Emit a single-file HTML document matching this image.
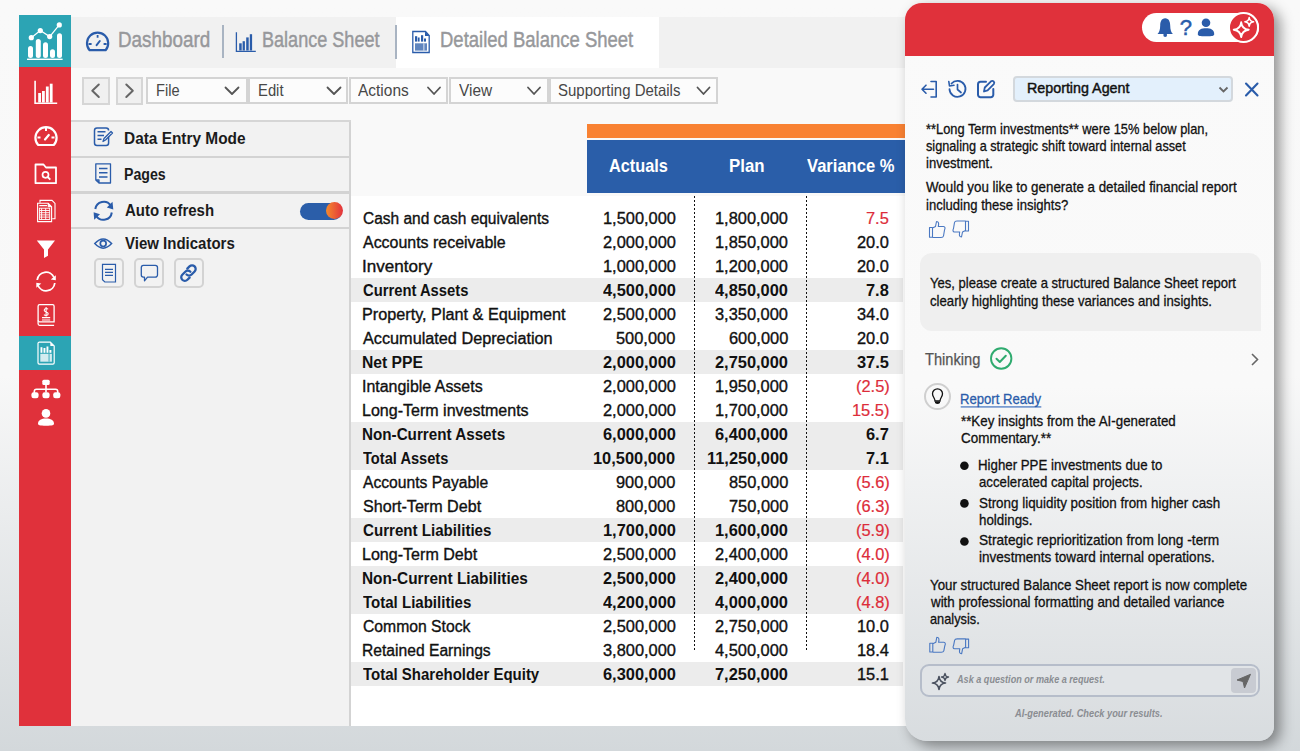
<!DOCTYPE html>
<html><head><meta charset="utf-8">
<style>
html,body{margin:0;padding:0;width:1300px;height:751px;overflow:hidden;}
body{position:relative;font-family:"Liberation Sans",sans-serif;background:linear-gradient(180deg,#f9f9f9 0%,#f8f8f8 50%,#d3d8db 100%);}
.a{position:absolute;}
.t{position:absolute;white-space:nowrap;line-height:1;transform-origin:0 0;}
svg{position:absolute;overflow:visible;}
</style></head><body>

<!-- main container -->
<div class="a" style="left:71px;top:68px;width:840px;height:658px;background:#f9f9f9;"></div>
<!-- tab bar -->
<div class="a" style="left:71px;top:16.5px;width:840px;height:51.5px;background:#f1f1f1;"></div>
<div class="a" style="left:396px;top:16.5px;width:263px;height:51.5px;background:#fff;"></div>
<div class="a" style="left:222px;top:25px;width:2px;height:33px;background:#a9b4c2;"></div>
<div class="a" style="left:394.5px;top:25px;width:2px;height:34px;background:#a9b4c2;"></div>

<!-- sidebar -->
<div class="a" style="left:19px;top:67px;width:51.5px;height:659px;background:#e0313b;"></div>
<div class="a" style="left:19px;top:15px;width:51.5px;height:52px;background:#2ca4b4;"></div>
<div class="a" style="left:19px;top:336px;width:51.5px;height:34px;background:#2ca4b4;"></div>

<!-- toolbar -->
<div class="a" style="left:82px;top:77px;width:23.5px;height:23.5px;background:#f0f0f0;border:2px solid #d6d6d6;"></div>
<div class="a" style="left:115.5px;top:77px;width:23.5px;height:23.5px;background:#f0f0f0;border:2px solid #d6d6d6;"></div>
<div class="a" style="left:145.5px;top:76.5px;width:98px;height:23.5px;background:#fcfcfc;border:2px solid #d4d4d4;"></div>
<div class="a" style="left:248px;top:76.5px;width:96px;height:23.5px;background:#fcfcfc;border:2px solid #d4d4d4;"></div>
<div class="a" style="left:349px;top:76.5px;width:95px;height:23.5px;background:#fcfcfc;border:2px solid #d4d4d4;"></div>
<div class="a" style="left:449px;top:76.5px;width:95.5px;height:23.5px;background:#fcfcfc;border:2px solid #d4d4d4;"></div>
<div class="a" style="left:549px;top:76.5px;width:164.5px;height:23.5px;background:#fcfcfc;border:2px solid #d4d4d4;"></div>
<svg width="1300" height="751" style="left:0;top:0" fill="none" stroke="#555" stroke-width="1.8" stroke-linecap="round" stroke-linejoin="round">
  <path d="M98.8 84.5 L92.3 90.8 L98.8 97" stroke="#666" stroke-width="2"/>
  <path d="M126.3 84.5 L132.8 90.8 L126.3 97" stroke="#666" stroke-width="2"/>
  <path d="M225.5 87.5 L232 94 L238.5 87.5"/>
  <path d="M327.5 87.5 L334 94 L340.5 87.5"/>
  <path d="M428 87.5 L434 94 L440 87.5"/>
  <path d="M528 87.5 L534 94 L540 87.5"/>
  <path d="M697.5 87.5 L703.5 94 L709.5 87.5"/>
</svg>

<!-- left panel -->
<div class="a" style="left:71px;top:121px;width:278px;height:605px;background:#f2f2f2;border-right:2px solid #d3d3d3;"></div>
<div class="a" style="left:71px;top:119.8px;width:280px;height:2.2px;background:#d6d6d6;"></div>
<div class="a" style="left:71px;top:155.5px;width:280px;height:2.5px;background:#d3d3d3;"></div>
<div class="a" style="left:71px;top:191.2px;width:280px;height:2.4px;background:#d3d3d3;"></div>
<div class="a" style="left:71px;top:226.7px;width:280px;height:2px;background:#d3d3d3;"></div>
<!-- toggle -->
<div class="a" style="left:300px;top:202.5px;width:42px;height:17px;border-radius:9px;background:#2b5ea9;"></div>
<div class="a" style="left:325.5px;top:202.3px;width:17px;height:17px;border-radius:50%;background:linear-gradient(90deg,#f58a2c,#e2323d);"></div>
<!-- indicator buttons -->
<div class="a" style="left:94px;top:258.3px;width:26.3px;height:26px;border:2px solid #d3d3d3;border-radius:5px;background:#f2f2f2;"></div>
<div class="a" style="left:134px;top:258.3px;width:26.3px;height:26px;border:2px solid #d3d3d3;border-radius:5px;background:#f2f2f2;"></div>
<div class="a" style="left:174px;top:258.3px;width:26.3px;height:26px;border:2px solid #d3d3d3;border-radius:5px;background:#f2f2f2;"></div>

<!-- table -->
<div class="a" style="left:351px;top:196px;width:560px;height:530px;background:#fff;"></div>
<div class="a" style="left:587px;top:124px;width:330px;height:13.5px;background:#f98233;"></div>
<div class="a" style="left:587px;top:140px;width:330px;height:52.8px;background:#2a5ea9;"></div>
<div class="a" style="left:351px;top:278px;width:552px;height:24px;background:#ececec;"></div>
<div class="a" style="left:351px;top:350px;width:552px;height:24px;background:#ececec;"></div>
<div class="a" style="left:351px;top:422px;width:552px;height:48px;background:#ececec;"></div>
<div class="a" style="left:351px;top:518px;width:552px;height:24px;background:#ececec;"></div>
<div class="a" style="left:351px;top:566px;width:552px;height:48px;background:#ececec;"></div>
<div class="a" style="left:351px;top:662px;width:552px;height:24px;background:#ececec;"></div>
<div class="a" style="left:694px;top:196px;width:1px;height:454px;background:repeating-linear-gradient(180deg,#111 0 2px,transparent 2px 4px);"></div>
<div class="a" style="left:806px;top:196px;width:1px;height:454px;background:repeating-linear-gradient(180deg,#111 0 2px,transparent 2px 4px);"></div>


<!-- sidebar icons -->
<svg width="1300" height="751" style="left:0;top:0">
 <!-- logo -->
 <g fill="#fff" stroke="none">
  <rect x="28" y="46" width="5" height="12" rx="2.5"/>
  <rect x="35.8" y="39" width="5" height="19" rx="2.5"/>
  <rect x="43" y="42.3" width="5" height="15.7" rx="2.5"/>
  <rect x="50" y="49.3" width="5" height="8.7" rx="2.5"/>
  <rect x="57" y="33.3" width="5" height="24.7" rx="2.5"/>
  <rect x="27" y="58.6" width="35.6" height="1.4"/>
  <circle cx="31.3" cy="37.7" r="2.6"/>
  <circle cx="40.3" cy="30.6" r="2.6"/>
  <circle cx="49.7" cy="36.6" r="2.6"/>
  <circle cx="59.3" cy="24.9" r="2.6"/>
 </g>
 <path d="M31.3 37.7 L40.3 30.6 L49.7 36.6 L59.3 24.9" stroke="#fff" stroke-width="1.2" fill="none"/>
 <g fill="none" stroke="#fff" stroke-width="1.6">
  <!-- 1 bar chart -->
  <path d="M35.1 80.8 V103.2 H57.2"/>
  <g fill="#fff" stroke="none"><rect x="38.2" y="93" width="2.8" height="9.5"/><rect x="42" y="91" width="2.8" height="11.5"/><rect x="45.9" y="86.5" width="2.8" height="16"/><rect x="49.8" y="83.7" width="2.8" height="18.8"/></g>
  <!-- 2 gauge -->
  <path d="M38.2 145 A10.6 10.6 0 1 1 53.8 145 Z" stroke-width="2.2"/>
  <path d="M46 128 V131 M37.5 137.5 H40.5 M51.5 137.5 H54.5" stroke-width="2"/>
  <path d="M45 139.5 L48.8 135" stroke-width="2.2" stroke-linecap="round"/>
  <!-- 3 folder search -->
  <path d="M35.5 164.5 H43.5 L46 167.5 H56 V183.2 H35.5 Z" stroke-width="1.8" stroke-linejoin="round"/>
  <circle cx="45.5" cy="174.8" r="3" stroke-width="1.7"/>
  <path d="M47.7 177 L50.3 179.6" stroke-width="1.8"/>
  <!-- 4 spreadsheet -->
  <path d="M40 202.8 V200.4 H52 L55 203.4 V218.8 H52.2" stroke-width="1.1"/>
  <path d="M37.6 203.3 H48.2 L51.6 206.7 V221.6 H37.6 Z" stroke-width="1.1" fill="#e0313b"/>
  <path d="M48.2 203.3 V206.7 H51.6" stroke-width="1" fill="#fff"/>
  <path d="M39.3 205.6 H47" stroke-width="1.2"/>
  <rect x="39.4" y="208.2" width="10.3" height="11.3" stroke-width="0.9"/>
  <path d="M41.6 208.2 V219.5 M45.7 208.2 V219.5 M39.4 210.5 H49.7 M39.4 212.7 H49.7 M39.4 214.9 H49.7 M39.4 217.1 H49.7" stroke-width="0.9"/>
  <!-- 6 refresh -->
  <path d="M37.2 280 A8.8 8.8 0 0 1 54 277.5" stroke-width="1.8"/>
  <path d="M54.8 283 A8.8 8.8 0 0 1 38 285.5" stroke-width="1.8"/>
  <!-- 7 dollar doc -->
  <path d="M39.6 304.7 H52.6 A1.5 1.5 0 0 1 54.1 306.2 V321.8 H39.6 A1.5 1.5 0 0 1 38.1 320.3 V306.2 A1.5 1.5 0 0 1 39.6 304.7 Z" stroke-width="1.3"/>
  <path d="M38.1 320.3 V323.8 A1.5 1.5 0 0 0 39.6 325.3 H54.1" stroke-width="1.3"/>
  <path d="M42 317.6 H50.2 M42 320 H50.2" stroke-width="1.1"/>
  <path d="M48 309.3 C47.5 308.2 44.2 308 44.2 310.2 C44.2 312.3 48.2 311.6 48.2 313.8 C48.2 315.8 44.8 315.7 44 314.6 M46.1 307 V316.5" stroke-width="1.1"/>
  <!-- 8 doc chart -->
  <path d="M39.3 342.2 H50.3 L54.2 346.1 V362.8 A1.3 1.3 0 0 1 52.9 364.1 H39.3 A1.3 1.3 0 0 1 38 362.8 V343.5 A1.3 1.3 0 0 1 39.3 342.2 Z" stroke-width="1.2"/>
 </g>
 <g fill="#fff">
  <path d="M55.8 275.2 L55.8 280.3 L50.8 279.6 Z"/>
  <path d="M36.3 287.8 L36.3 282.7 L41.3 283.4 Z"/>
  <!-- filter -->
  <path d="M36.8 240.4 H55 L48 249.5 V255.8 L44 258 V249.5 Z"/>
  <!-- dollar -->
  
  <!-- doc chart fill -->
  <path d="M50.3 342.2 L54.2 346.1 H50.3 Z"/>
  <rect x="40.3" y="353.8" width="11.6" height="7.9" fill="#d3ecf0"/>
  <rect x="40.5" y="347.2" width="1.9" height="5.6"/><rect x="43.5" y="348" width="1.9" height="4.8"/><rect x="46.5" y="346.5" width="1.9" height="6.3"/><rect x="49.4" y="350" width="2" height="2.8"/>
  <!-- org chart -->
  <rect x="42.3" y="379.8" width="7.4" height="5.2" rx="1.5"/>
  <rect x="31.4" y="392.2" width="7.2" height="6" rx="2.3"/>
  <rect x="42.4" y="392.2" width="7.2" height="6" rx="2.3"/>
  <rect x="53.2" y="392.2" width="7.2" height="6" rx="2.3"/>
  <rect x="45.2" y="384.5" width="1.6" height="8"/>
  <path d="M34.3 393 V391.5 Q34.3 389.3 36.5 389.3 H55.5 Q57.7 389.3 57.7 391.5 V393" fill="none" stroke="#fff" stroke-width="1.6"/>
  <!-- user -->
  <circle cx="46" cy="413.4" r="4.3"/>
  <path d="M38 423.6 C38 420 41.5 418.4 46 418.4 C50.5 418.4 54 420 54 423.6 C54 425.3 52.5 425.8 46 425.8 C39.5 425.8 38 425.3 38 423.6 Z"/>
 </g>
 <g fill="#2ca4b4"><rect x="48.6" y="353.8" width="0.9" height="7.9"/></g>
</svg>

<!-- blue icons main -->
<svg width="1300" height="751" style="left:0;top:0" fill="none" stroke="#2a5caa">
 <!-- tab gauge -->
 <path d="M89.6 50.2 A10.6 10.6 0 1 1 105.6 50.2 Z" stroke-width="2.2" stroke-linejoin="round"/>
 <path d="M97.6 35 V37.8 M88.6 44 H91.6 M103.6 44 H106.6" stroke-width="1.8"/>
 <path d="M96.6 45.2 L99.8 41" stroke-width="2" stroke-linecap="round"/>
 <!-- tab bar chart -->
 <path d="M236.4 32.2 V51.3 H255.8" stroke-width="1.3"/>
 <g fill="#2a5caa" stroke="none"><rect x="239.2" y="43.3" width="2.5" height="7.2"/><rect x="242.6" y="41.2" width="2.3" height="9.3"/><rect x="246.2" y="37.4" width="2.5" height="13.1"/><rect x="249.8" y="34.2" width="2.3" height="16.3"/></g>
 <!-- tab doc -->
 <path d="M412.8 31.5 H425.5 L429.2 35.5 V52.5 H412.8 Z" stroke-width="1.3"/>
 <g fill="#2a5caa" stroke="none"><path d="M425 31.5 L429.5 36 L425 36 Z"/><rect x="415" y="36.2" width="2.2" height="5.4"/><rect x="417.8" y="37.5" width="1.8" height="4.1"/><rect x="421" y="35.2" width="2.2" height="6.4"/><rect x="424" y="38.5" width="2" height="3.1"/>
 <rect x="415" y="43.3" width="12" height="7.3" opacity="0.75"/></g>
 <rect x="423.5" y="43.3" width="0.8" height="7.3" fill="#fff" stroke="none"/>
 <!-- data entry -->
 <path d="M108.6 136.5 V143 A2.5 2.5 0 0 1 106.1 145.5 H97 A2.5 2.5 0 0 1 94.5 143 V130.5 A2.5 2.5 0 0 1 97 128 H106.1 A2.5 2.5 0 0 1 108.6 130.5" stroke-width="1.5"/>
 <path d="M97.5 131.8 H105.5 M97.5 135.5 H104 M97.5 139.2 H101.5" stroke-width="1.5"/>
 <path d="M103 141.5 L104 138.5 L111 131.5 L112.5 133 L105.5 140 Z" stroke-width="1.3" stroke-linejoin="round"/>
 <!-- pages -->
 <path d="M95.8 163.8 H110.5 V183 H99 L95.8 180 Z M95.8 180 H99 V183" stroke-width="1.3" stroke-linejoin="round"/>
 <path d="M99 168.5 H107.5 M99 172.8 H107.5 M99 177 H107.5" stroke-width="1.4"/>
 <!-- auto refresh -->
 <path d="M95.3 209 A8.5 8.5 0 0 1 110.8 205.5" stroke-width="2"/>
 <path d="M111.8 212.5 A8.5 8.5 0 0 1 96.3 216" stroke-width="2"/>
 <g fill="#2a5caa" stroke="none"><path d="M112.5 201.8 L113.3 209.5 L106.8 207.5 Z"/><path d="M94.2 219.8 L93.6 212.2 L100 214.3 Z"/></g>
 <!-- eye -->
 <path d="M94.8 243.6 Q103.2 234.5 111.6 243.6 Q103.2 252.7 94.8 243.6 Z" stroke-width="1.5"/>
 <circle cx="103.2" cy="243.6" r="2.9" stroke-width="1.7"/>
 <!-- indicator doc -->
 <path d="M102.5 264.3 H115.5 V282 H104.8 L102.5 279.8 Z" stroke-width="1.2"/>
 <path d="M105 269.4 H113 M105 272.4 H113 M105 275.4 H113" stroke-width="1.2"/>
 <!-- speech -->
 <path d="M143.3 265.4 H155.3 A2.2 2.2 0 0 1 157.5 267.6 V275 A2.2 2.2 0 0 1 155.3 277.2 H147.5 L144.5 280.8 L144.5 277.2 H143.3 A2.2 2.2 0 0 1 141.3 275 V267.6 A2.2 2.2 0 0 1 143.3 265.4 Z" stroke-width="1.3" stroke-linejoin="round"/>
 <!-- link -->
 <g stroke-width="2.3" stroke-linecap="round">
  <path d="M187.3 268.6 L189.5 266.4 A3.6 3.6 0 0 1 194.6 271.5 L191.6 274.5 A3.6 3.6 0 0 1 186.5 274.5"/>
  <path d="M189.6 277.6 L187.4 279.8 A3.6 3.6 0 0 1 182.3 274.7 L185.3 271.7 A3.6 3.6 0 0 1 190.4 271.7"/>
 </g>
</svg>

<div class="t" style="left:117.84px;top:28.80px;font-size:22px;font-weight:normal;font-style:normal;color:#97989b;transform:scaleX(0.8568);-webkit-text-stroke:0.45px #97989b;">Dashboard</div>
<div class="t" style="left:262.18px;top:28.80px;font-size:22px;font-weight:normal;font-style:normal;color:#97989b;transform:scaleX(0.8212);-webkit-text-stroke:0.45px #97989b;">Balance Sheet</div>
<div class="t" style="left:440.16px;top:28.60px;font-size:22px;font-weight:normal;font-style:normal;color:#97989b;transform:scaleX(0.8404);-webkit-text-stroke:0.45px #97989b;">Detailed Balance Sheet</div>
<div class="t" style="left:155.81px;top:81.88px;font-size:16.5px;font-weight:normal;font-style:normal;color:#474747;transform:scaleX(0.8855);">File</div>
<div class="t" style="left:257.60px;top:81.88px;font-size:16.5px;font-weight:normal;font-style:normal;color:#474747;transform:scaleX(0.8977);">Edit</div>
<div class="t" style="left:357.80px;top:81.88px;font-size:16.5px;font-weight:normal;font-style:normal;color:#474747;transform:scaleX(0.9376);">Actions</div>
<div class="t" style="left:458.50px;top:81.88px;font-size:16.5px;font-weight:normal;font-style:normal;color:#474747;transform:scaleX(0.9339);">View</div>
<div class="t" style="left:557.80px;top:81.88px;font-size:16.5px;font-weight:normal;font-style:normal;color:#474747;transform:scaleX(0.9080);">Supporting Details</div>
<div class="t" style="left:124.04px;top:130.60px;font-size:16px;font-weight:bold;font-style:normal;color:#1b1b1b;transform:scaleX(0.9630);">Data Entry Mode</div>
<div class="t" style="left:124.12px;top:166.90px;font-size:16px;font-weight:bold;font-style:normal;color:#1b1b1b;transform:scaleX(0.8845);">Pages</div>
<div class="t" style="left:125.00px;top:202.90px;font-size:16px;font-weight:bold;font-style:normal;color:#1b1b1b;transform:scaleX(0.9359);">Auto refresh</div>
<div class="t" style="left:125.00px;top:235.90px;font-size:16px;font-weight:bold;font-style:normal;color:#1b1b1b;transform:scaleX(0.9379);">View Indicators</div>
<div class="t" style="left:363.00px;top:210.80px;font-size:16px;font-weight:normal;font-style:normal;color:#111;transform:scaleX(0.9681);-webkit-text-stroke:0.35px #111;">Cash and cash equivalents</div>
<div class="t" style="left:602.54px;top:210.80px;font-size:16px;font-weight:normal;font-style:normal;color:#111;transform:scaleX(1.0250);-webkit-text-stroke:0.35px #111;">1,500,000</div>
<div class="t" style="left:715.44px;top:210.80px;font-size:16px;font-weight:normal;font-style:normal;color:#111;transform:scaleX(1.0250);-webkit-text-stroke:0.35px #111;">1,800,000</div>
<div class="t" style="left:866.00px;top:210.80px;font-size:16px;font-weight:normal;font-style:normal;color:#dd2c3a;transform:scaleX(1.0250);-webkit-text-stroke:0.2px #dd2c3a;">7.5</div>
<div class="t" style="left:363.00px;top:234.80px;font-size:16px;font-weight:normal;font-style:normal;color:#111;transform:scaleX(0.9966);-webkit-text-stroke:0.35px #111;">Accounts receivable</div>
<div class="t" style="left:602.54px;top:234.80px;font-size:16px;font-weight:normal;font-style:normal;color:#111;transform:scaleX(1.0250);-webkit-text-stroke:0.35px #111;">2,000,000</div>
<div class="t" style="left:715.44px;top:234.80px;font-size:16px;font-weight:normal;font-style:normal;color:#111;transform:scaleX(1.0250);-webkit-text-stroke:0.35px #111;">1,850,000</div>
<div class="t" style="left:856.88px;top:234.80px;font-size:16px;font-weight:normal;font-style:normal;color:#111;transform:scaleX(1.0250);-webkit-text-stroke:0.35px #111;">20.0</div>
<div class="t" style="left:361.93px;top:258.80px;font-size:16px;font-weight:normal;font-style:normal;color:#111;transform:scaleX(1.0677);-webkit-text-stroke:0.35px #111;">Inventory</div>
<div class="t" style="left:602.54px;top:258.80px;font-size:16px;font-weight:normal;font-style:normal;color:#111;transform:scaleX(1.0250);-webkit-text-stroke:0.35px #111;">1,000,000</div>
<div class="t" style="left:715.44px;top:258.80px;font-size:16px;font-weight:normal;font-style:normal;color:#111;transform:scaleX(1.0250);-webkit-text-stroke:0.35px #111;">1,200,000</div>
<div class="t" style="left:856.88px;top:258.80px;font-size:16px;font-weight:normal;font-style:normal;color:#111;transform:scaleX(1.0250);-webkit-text-stroke:0.35px #111;">20.0</div>
<div class="t" style="left:363.00px;top:282.80px;font-size:16px;font-weight:bold;font-style:normal;color:#111;transform:scaleX(0.9233);">Current Assets</div>
<div class="t" style="left:602.54px;top:282.80px;font-size:16px;font-weight:bold;font-style:normal;color:#111;transform:scaleX(1.0250);">4,500,000</div>
<div class="t" style="left:715.44px;top:282.80px;font-size:16px;font-weight:bold;font-style:normal;color:#111;transform:scaleX(1.0250);">4,850,000</div>
<div class="t" style="left:866.00px;top:282.80px;font-size:16px;font-weight:bold;font-style:normal;color:#111;transform:scaleX(1.0250);">7.8</div>
<div class="t" style="left:361.99px;top:306.80px;font-size:16px;font-weight:normal;font-style:normal;color:#111;transform:scaleX(1.0137);-webkit-text-stroke:0.35px #111;">Property, Plant &amp; Equipment</div>
<div class="t" style="left:602.54px;top:306.80px;font-size:16px;font-weight:normal;font-style:normal;color:#111;transform:scaleX(1.0250);-webkit-text-stroke:0.35px #111;">2,500,000</div>
<div class="t" style="left:715.44px;top:306.80px;font-size:16px;font-weight:normal;font-style:normal;color:#111;transform:scaleX(1.0250);-webkit-text-stroke:0.35px #111;">3,350,000</div>
<div class="t" style="left:856.88px;top:306.80px;font-size:16px;font-weight:normal;font-style:normal;color:#111;transform:scaleX(1.0250);-webkit-text-stroke:0.35px #111;">34.0</div>
<div class="t" style="left:363.00px;top:330.80px;font-size:16px;font-weight:normal;font-style:normal;color:#111;transform:scaleX(1.0152);-webkit-text-stroke:0.35px #111;">Accumulated Depreciation</div>
<div class="t" style="left:616.21px;top:330.80px;font-size:16px;font-weight:normal;font-style:normal;color:#111;transform:scaleX(1.0250);-webkit-text-stroke:0.35px #111;">500,000</div>
<div class="t" style="left:729.11px;top:330.80px;font-size:16px;font-weight:normal;font-style:normal;color:#111;transform:scaleX(1.0250);-webkit-text-stroke:0.35px #111;">600,000</div>
<div class="t" style="left:856.88px;top:330.80px;font-size:16px;font-weight:normal;font-style:normal;color:#111;transform:scaleX(1.0250);-webkit-text-stroke:0.35px #111;">20.0</div>
<div class="t" style="left:362.02px;top:354.80px;font-size:16px;font-weight:bold;font-style:normal;color:#111;transform:scaleX(0.9794);">Net PPE</div>
<div class="t" style="left:602.54px;top:354.80px;font-size:16px;font-weight:bold;font-style:normal;color:#111;transform:scaleX(1.0250);">2,000,000</div>
<div class="t" style="left:715.44px;top:354.80px;font-size:16px;font-weight:bold;font-style:normal;color:#111;transform:scaleX(1.0250);">2,750,000</div>
<div class="t" style="left:856.88px;top:354.80px;font-size:16px;font-weight:bold;font-style:normal;color:#111;transform:scaleX(1.0250);">37.5</div>
<div class="t" style="left:362.00px;top:378.80px;font-size:16px;font-weight:normal;font-style:normal;color:#111;transform:scaleX(0.9971);-webkit-text-stroke:0.35px #111;">Intangible Assets</div>
<div class="t" style="left:602.54px;top:378.80px;font-size:16px;font-weight:normal;font-style:normal;color:#111;transform:scaleX(1.0250);-webkit-text-stroke:0.35px #111;">2,000,000</div>
<div class="t" style="left:715.44px;top:378.80px;font-size:16px;font-weight:normal;font-style:normal;color:#111;transform:scaleX(1.0250);-webkit-text-stroke:0.35px #111;">1,950,000</div>
<div class="t" style="left:855.52px;top:378.80px;font-size:16px;font-weight:normal;font-style:normal;color:#dd2c3a;transform:scaleX(1.0250);-webkit-text-stroke:0.2px #dd2c3a;">(2.5)</div>
<div class="t" style="left:362.00px;top:402.80px;font-size:16px;font-weight:normal;font-style:normal;color:#111;transform:scaleX(1.0019);-webkit-text-stroke:0.35px #111;">Long-Term investments</div>
<div class="t" style="left:602.54px;top:402.80px;font-size:16px;font-weight:normal;font-style:normal;color:#111;transform:scaleX(1.0250);-webkit-text-stroke:0.35px #111;">2,000,000</div>
<div class="t" style="left:715.44px;top:402.80px;font-size:16px;font-weight:normal;font-style:normal;color:#111;transform:scaleX(1.0250);-webkit-text-stroke:0.35px #111;">1,700,000</div>
<div class="t" style="left:851.86px;top:402.80px;font-size:16px;font-weight:normal;font-style:normal;color:#dd2c3a;transform:scaleX(1.0250);-webkit-text-stroke:0.2px #dd2c3a;">15.5)</div>
<div class="t" style="left:362.05px;top:426.80px;font-size:16px;font-weight:bold;font-style:normal;color:#111;transform:scaleX(0.9505);">Non-Current Assets</div>
<div class="t" style="left:602.54px;top:426.80px;font-size:16px;font-weight:bold;font-style:normal;color:#111;transform:scaleX(1.0250);">6,000,000</div>
<div class="t" style="left:715.44px;top:426.80px;font-size:16px;font-weight:bold;font-style:normal;color:#111;transform:scaleX(1.0250);">6,400,000</div>
<div class="t" style="left:866.00px;top:426.80px;font-size:16px;font-weight:bold;font-style:normal;color:#111;transform:scaleX(1.0250);">6.7</div>
<div class="t" style="left:363.00px;top:450.80px;font-size:16px;font-weight:bold;font-style:normal;color:#111;transform:scaleX(0.9144);">Total Assets</div>
<div class="t" style="left:593.42px;top:450.80px;font-size:16px;font-weight:bold;font-style:normal;color:#111;transform:scaleX(1.0250);">10,500,000</div>
<div class="t" style="left:707.22px;top:450.80px;font-size:16px;font-weight:bold;font-style:normal;color:#111;transform:scaleX(1.0250);">11,250,000</div>
<div class="t" style="left:866.00px;top:450.80px;font-size:16px;font-weight:bold;font-style:normal;color:#111;transform:scaleX(1.0250);">7.1</div>
<div class="t" style="left:363.00px;top:474.80px;font-size:16px;font-weight:normal;font-style:normal;color:#111;transform:scaleX(0.9783);-webkit-text-stroke:0.35px #111;">Accounts Payable</div>
<div class="t" style="left:616.21px;top:474.80px;font-size:16px;font-weight:normal;font-style:normal;color:#111;transform:scaleX(1.0250);-webkit-text-stroke:0.35px #111;">900,000</div>
<div class="t" style="left:729.11px;top:474.80px;font-size:16px;font-weight:normal;font-style:normal;color:#111;transform:scaleX(1.0250);-webkit-text-stroke:0.35px #111;">850,000</div>
<div class="t" style="left:855.52px;top:474.80px;font-size:16px;font-weight:normal;font-style:normal;color:#dd2c3a;transform:scaleX(1.0250);-webkit-text-stroke:0.2px #dd2c3a;">(5.6)</div>
<div class="t" style="left:363.00px;top:498.80px;font-size:16px;font-weight:normal;font-style:normal;color:#111;transform:scaleX(1.0066);-webkit-text-stroke:0.35px #111;">Short-Term Debt</div>
<div class="t" style="left:616.21px;top:498.80px;font-size:16px;font-weight:normal;font-style:normal;color:#111;transform:scaleX(1.0250);-webkit-text-stroke:0.35px #111;">800,000</div>
<div class="t" style="left:729.11px;top:498.80px;font-size:16px;font-weight:normal;font-style:normal;color:#111;transform:scaleX(1.0250);-webkit-text-stroke:0.35px #111;">750,000</div>
<div class="t" style="left:855.52px;top:498.80px;font-size:16px;font-weight:normal;font-style:normal;color:#dd2c3a;transform:scaleX(1.0250);-webkit-text-stroke:0.2px #dd2c3a;">(6.3)</div>
<div class="t" style="left:363.00px;top:522.80px;font-size:16px;font-weight:bold;font-style:normal;color:#111;transform:scaleX(0.9440);">Current Liabilities</div>
<div class="t" style="left:602.54px;top:522.80px;font-size:16px;font-weight:bold;font-style:normal;color:#111;transform:scaleX(1.0250);">1,700,000</div>
<div class="t" style="left:715.44px;top:522.80px;font-size:16px;font-weight:bold;font-style:normal;color:#111;transform:scaleX(1.0250);">1,600,000</div>
<div class="t" style="left:855.52px;top:522.80px;font-size:16px;font-weight:normal;font-style:normal;color:#dd2c3a;transform:scaleX(1.0250);-webkit-text-stroke:0.2px #dd2c3a;">(5.9)</div>
<div class="t" style="left:362.00px;top:546.80px;font-size:16px;font-weight:normal;font-style:normal;color:#111;transform:scaleX(1.0037);-webkit-text-stroke:0.35px #111;">Long-Term Debt</div>
<div class="t" style="left:602.54px;top:546.80px;font-size:16px;font-weight:normal;font-style:normal;color:#111;transform:scaleX(1.0250);-webkit-text-stroke:0.35px #111;">2,500,000</div>
<div class="t" style="left:715.44px;top:546.80px;font-size:16px;font-weight:normal;font-style:normal;color:#111;transform:scaleX(1.0250);-webkit-text-stroke:0.35px #111;">2,400,000</div>
<div class="t" style="left:855.52px;top:546.80px;font-size:16px;font-weight:normal;font-style:normal;color:#dd2c3a;transform:scaleX(1.0250);-webkit-text-stroke:0.2px #dd2c3a;">(4.0)</div>
<div class="t" style="left:362.04px;top:570.80px;font-size:16px;font-weight:bold;font-style:normal;color:#111;transform:scaleX(0.9618);">Non-Current Liabilities</div>
<div class="t" style="left:602.54px;top:570.80px;font-size:16px;font-weight:bold;font-style:normal;color:#111;transform:scaleX(1.0250);">2,500,000</div>
<div class="t" style="left:715.44px;top:570.80px;font-size:16px;font-weight:bold;font-style:normal;color:#111;transform:scaleX(1.0250);">2,400,000</div>
<div class="t" style="left:855.52px;top:570.80px;font-size:16px;font-weight:normal;font-style:normal;color:#dd2c3a;transform:scaleX(1.0250);-webkit-text-stroke:0.2px #dd2c3a;">(4.0)</div>
<div class="t" style="left:363.00px;top:594.80px;font-size:16px;font-weight:bold;font-style:normal;color:#111;transform:scaleX(0.9395);">Total Liabilities</div>
<div class="t" style="left:602.54px;top:594.80px;font-size:16px;font-weight:bold;font-style:normal;color:#111;transform:scaleX(1.0250);">4,200,000</div>
<div class="t" style="left:715.44px;top:594.80px;font-size:16px;font-weight:bold;font-style:normal;color:#111;transform:scaleX(1.0250);">4,000,000</div>
<div class="t" style="left:855.52px;top:594.80px;font-size:16px;font-weight:normal;font-style:normal;color:#dd2c3a;transform:scaleX(1.0250);-webkit-text-stroke:0.2px #dd2c3a;">(4.8)</div>
<div class="t" style="left:363.00px;top:618.80px;font-size:16px;font-weight:normal;font-style:normal;color:#111;transform:scaleX(0.9822);-webkit-text-stroke:0.35px #111;">Common Stock</div>
<div class="t" style="left:602.54px;top:618.80px;font-size:16px;font-weight:normal;font-style:normal;color:#111;transform:scaleX(1.0250);-webkit-text-stroke:0.35px #111;">2,500,000</div>
<div class="t" style="left:715.44px;top:618.80px;font-size:16px;font-weight:normal;font-style:normal;color:#111;transform:scaleX(1.0250);-webkit-text-stroke:0.35px #111;">2,750,000</div>
<div class="t" style="left:856.88px;top:618.80px;font-size:16px;font-weight:normal;font-style:normal;color:#111;transform:scaleX(1.0250);-webkit-text-stroke:0.35px #111;">10.0</div>
<div class="t" style="left:362.02px;top:642.80px;font-size:16px;font-weight:normal;font-style:normal;color:#111;transform:scaleX(0.9775);-webkit-text-stroke:0.35px #111;">Retained Earnings</div>
<div class="t" style="left:602.54px;top:642.80px;font-size:16px;font-weight:normal;font-style:normal;color:#111;transform:scaleX(1.0250);-webkit-text-stroke:0.35px #111;">3,800,000</div>
<div class="t" style="left:715.44px;top:642.80px;font-size:16px;font-weight:normal;font-style:normal;color:#111;transform:scaleX(1.0250);-webkit-text-stroke:0.35px #111;">4,500,000</div>
<div class="t" style="left:856.88px;top:642.80px;font-size:16px;font-weight:normal;font-style:normal;color:#111;transform:scaleX(1.0250);-webkit-text-stroke:0.35px #111;">18.4</div>
<div class="t" style="left:363.00px;top:666.80px;font-size:16px;font-weight:bold;font-style:normal;color:#111;transform:scaleX(0.9364);">Total Shareholder Equity</div>
<div class="t" style="left:602.54px;top:666.80px;font-size:16px;font-weight:bold;font-style:normal;color:#111;transform:scaleX(1.0250);">6,300,000</div>
<div class="t" style="left:715.44px;top:666.80px;font-size:16px;font-weight:bold;font-style:normal;color:#111;transform:scaleX(1.0250);">7,250,000</div>
<div class="t" style="left:856.88px;top:666.80px;font-size:16px;font-weight:normal;font-style:normal;color:#111;transform:scaleX(1.0250);-webkit-text-stroke:0.35px #111;">15.1</div>
<div class="t" style="left:608.60px;top:156.05px;font-size:19px;font-weight:bold;font-style:normal;color:#fff;transform:scaleX(0.8580);">Actuals</div>
<div class="t" style="left:729.31px;top:156.05px;font-size:19px;font-weight:bold;font-style:normal;color:#fff;transform:scaleX(0.8853);">Plan</div>
<div class="t" style="left:806.70px;top:156.05px;font-size:19px;font-weight:bold;font-style:normal;color:#fff;transform:scaleX(0.8721);">Variance %</div>

<!-- chat panel -->
<div class="a" style="left:905px;top:3px;width:369px;height:738px;border-radius:17px 17px 15px 22px;background:linear-gradient(180deg,#fafafa 0%,#f9f9f9 52%,#d8dcdf 100%);box-shadow:6px 5px 14px rgba(0,0,0,0.42);overflow:hidden;">
  <div class="a" style="left:0;top:0;width:369px;height:53px;background:#e0313b;"></div>
</div>
<!-- chat components -->
<div class="a" style="left:1141.8px;top:12.8px;width:117px;height:28.8px;border-radius:14.4px;background:#fff;"></div>
<div class="a" style="left:1228.3px;top:12.1px;width:26.5px;height:26.5px;border-radius:50%;background:#e0313b;border:2px solid #fff;"></div>
<div class="a" style="left:1013px;top:76.2px;width:216px;height:21.6px;border-radius:4px;background:#e3f0fc;border:2px solid #d3d8dd;"></div>
<div class="a" style="left:920px;top:253.3px;width:341px;height:78.2px;border-radius:12px 12px 0 12px;background:#efefef;"></div>
<div class="a" style="left:924px;top:383.2px;width:22.6px;height:22.8px;border-radius:50%;border:2px solid #cfcfcf;"></div>
<div class="a" style="left:919.5px;top:664.2px;width:336px;height:28.7px;border-radius:9px;border:2px solid #b6bdca;background:#e1e4e7;"></div>
<div class="a" style="left:1231.2px;top:668px;width:24.6px;height:25px;border-radius:4px;background:#c8cbd2;"></div>
<svg width="1300" height="751" style="left:0;top:0">
 <g fill="#2a5caa">
  <!-- bell -->
  <path d="M1165.2 18.3 C1161.5 18.3 1160.2 22 1160.2 25.5 C1160.2 30 1159 32.5 1157.5 34 H1172.9 C1171.4 32.5 1170.2 30 1170.2 25.5 C1170.2 22 1168.9 18.3 1165.2 18.3 Z"/>
  <circle cx="1165.2" cy="35" r="1.9"/>
  <!-- user -->
  <circle cx="1206" cy="22.8" r="4.3"/>
  <path d="M1197.8 34 C1197.8 29.5 1201.5 28.3 1206 28.3 C1210.5 28.3 1214.2 29.5 1214.2 34 C1214.2 36 1212.5 36.3 1206 36.3 C1199.5 36.3 1197.8 36 1197.8 34 Z"/>
 </g>
 <text x="1185.9" y="35.3" font-size="22" font-family="Liberation Sans" text-anchor="middle" fill="#2a5caa" stroke="#2a5caa" stroke-width="0.5">?</text>
 <!-- sparkles -->
 <g fill="none" stroke="#fff" stroke-width="1.7" stroke-linejoin="round">
  <path d="M1241.2 22.3 Q1242 29 1248.7 29.7 Q1242 30.4 1241.2 37.1 Q1240.4 30.4 1233.7 29.7 Q1240.4 29 1241.2 22.3 Z" stroke-width="1.9"/>
  <path d="M1249.2 17.5 Q1249.7 21.3 1253.5 21.8 Q1249.7 22.3 1249.2 26.1 Q1248.7 22.3 1244.9 21.8 Q1248.7 21.3 1249.2 17.5 Z" stroke-width="1.6"/>
 </g>
 <g fill="none" stroke="#2a5caa" stroke-width="1.6" stroke-linecap="round" stroke-linejoin="round">
  <!-- logout -->
  <path d="M931 81.5 H936.2 V97 H931"/>
  <path d="M933.5 89.2 H922 M926 85.2 L922 89.2 L926 93.2"/>
  <!-- history -->
  <path d="M949.5 89.2 A8 8 0 1 0 951.5 83.5" stroke-width="1.8"/>
  <path d="M948.8 81.5 L949.5 86 L954 85.3" stroke-width="1.6"/>
  <path d="M957.5 84.5 V89.5 L961 92.5" stroke-width="1.7"/>
  <!-- edit -->
  <path d="M986 81.8 H980.5 A2.5 2.5 0 0 0 978 84.3 V94.7 A2.5 2.5 0 0 0 980.5 97.2 H990.8 A2.5 2.5 0 0 0 993.3 94.7 V89" stroke-width="2"/>
  <path d="M984 91.5 L984.8 87.5 L991 81.3 A2 2 0 0 1 993.8 84.1 L987.6 90.3 Z" stroke-width="1.8"/>
  <!-- X -->
  <path d="M1246 83.5 L1257.5 95.5 M1257.5 83.5 L1246 95.5" stroke-width="2.1"/>
 </g>
 <path d="M1219.5 87.5 L1223.5 91.5 L1227.5 87.5" fill="none" stroke="#666" stroke-width="1.8"/>
 <!-- thumbs -->
 <g fill="none" stroke="#4a78c2" stroke-width="1.1" stroke-linejoin="round">
  <path d="M929.5 227.5 H932.5 V237.3 H929.5 Z M932.5 228 L935.5 226.5 L936.5 221.5 C938.8 221.5 939 223.5 938.3 226.5 H943.5 C945.3 226.5 945.3 228.5 944.5 230 L943.5 236 C943.2 237.3 942.5 237.5 941 237.5 H932.5"/>
  <path d="M968.5 231 H965.5 V221.3 H968.5 Z M965.5 230.5 L962.5 232 L961.5 237 C959.2 237 959 235 959.7 232 H954.5 C952.7 232 952.7 230 953.5 228.5 L954.5 222.5 C954.8 221.2 955.5 221 957 221 H965.5"/>
  <path d="M929.8 643.3 H932.8 V652 H929.8 Z M932.8 643.8 L935.8 642.3 L936.8 637.3 C939.1 637.3 939.3 639.3 938.6 642.3 H943.8 C945.6 642.3 945.6 644.3 944.8 645.8 L943.8 650.8 C943.5 652 942.8 652.2 941.3 652.2 H932.8"/>
  <path d="M968.6 647.8 H965.6 V639.1 H968.6 Z M965.6 647.3 L962.6 648.8 L961.6 653.8 C959.3 653.8 959.1 651.8 959.8 648.8 H954.6 C952.8 648.8 952.8 646.8 953.6 645.3 L954.6 640.3 C954.9 639.1 955.6 638.9 957.1 638.9 H965.6"/>
 </g>
 <!-- check -->
 <circle cx="1001.2" cy="358.5" r="10.2" fill="none" stroke="#2fab6f" stroke-width="1.9"/>
 <path d="M996.5 358.8 L999.8 362 L1005.8 355.8" fill="none" stroke="#2fab6f" stroke-width="2" stroke-linecap="round" stroke-linejoin="round"/>
 <!-- chevron right -->
 <path d="M1252 354 L1257.5 359.5 L1252 365" fill="none" stroke="#666" stroke-width="1.6"/>
 <!-- bulb -->
 <path d="M935 401 C935 398 932.5 397 932.5 393.8 A5 5 0 0 1 942.5 393.8 C942.5 397 940 398 940 401 Z" fill="none" stroke="#111" stroke-width="1.3"/>
 <path d="M935 401.5 H940 V403 Q937.5 405 935 403 Z" fill="#111"/>
 <!-- bullets -->
 <g fill="#111"><circle cx="964.4" cy="465.7" r="4.3"/><circle cx="964.4" cy="503.4" r="4.3"/><circle cx="964.4" cy="541.5" r="4.3"/></g>
 <!-- underline report ready -->
 <rect x="960.7" y="406.2" width="80.6" height="1.4" fill="#5a84c6"/>
 <!-- input sparkle -->
 <g fill="none" stroke="#4b5260" stroke-width="1.7" stroke-linejoin="round">
  <path d="M939 676.5 Q939.6 682.4 945.5 683 Q939.6 683.6 939 689.5 Q938.4 683.6 932.5 683 Q938.4 682.4 939 676.5 Z"/>
  <path d="M945 673.5 Q945.3 676.7 948.5 677 Q945.3 677.3 945 680.5 Q944.7 677.3 941.5 677 Q944.7 676.7 945 673.5 Z" stroke-width="1.4"/>
 </g>
 <!-- send -->
 <path d="M1237 680 L1250.5 674.3 L1244.5 688 L1243 681.5 Z" fill="#666" stroke="#666" stroke-width="1" stroke-linejoin="round"/>
</svg>
<div class="t" style="left:1026.77px;top:79.80px;font-size:15.3px;font-weight:normal;font-style:normal;color:#111;transform:scaleX(0.9338);-webkit-text-stroke:0.45px #111;">Reporting Agent</div>
<div class="t" style="left:926.30px;top:121.54px;font-size:14.3px;font-weight:normal;font-style:normal;color:#111111;transform:scaleX(0.8992);-webkit-text-stroke:0.3px #111111;">**Long Term investments** were 15% below plan,</div>
<div class="t" style="left:926.30px;top:139.15px;font-size:14.3px;font-weight:normal;font-style:normal;color:#111111;transform:scaleX(0.8879);-webkit-text-stroke:0.3px #111111;">signaling a strategic shift toward internal asset</div>
<div class="t" style="left:926.30px;top:155.75px;font-size:14.3px;font-weight:normal;font-style:normal;color:#111111;transform:scaleX(0.9150);-webkit-text-stroke:0.3px #111111;">investment.</div>
<div class="t" style="left:926.30px;top:180.44px;font-size:14.3px;font-weight:normal;font-style:normal;color:#111111;transform:scaleX(0.9337);-webkit-text-stroke:0.3px #111111;">Would you like to generate a detailed financial report</div>
<div class="t" style="left:926.30px;top:197.75px;font-size:14.3px;font-weight:normal;font-style:normal;color:#111111;transform:scaleX(0.9132);-webkit-text-stroke:0.3px #111111;">including these insights?</div>
<div class="t" style="left:930.00px;top:275.95px;font-size:14.3px;font-weight:normal;font-style:normal;color:#111111;transform:scaleX(0.9137);-webkit-text-stroke:0.3px #111111;">Yes, please create a structured Balance Sheet report</div>
<div class="t" style="left:930.00px;top:293.64px;font-size:14.3px;font-weight:normal;font-style:normal;color:#111111;transform:scaleX(0.9213);-webkit-text-stroke:0.3px #111111;">clearly highlighting these variances and insights.</div>
<div class="t" style="left:925.00px;top:352.04px;font-size:15.6px;font-weight:normal;font-style:normal;color:#555;transform:scaleX(0.9388);-webkit-text-stroke:0.25px #555;">Thinking</div>
<div class="t" style="left:959.81px;top:391.62px;font-size:14.8px;font-weight:normal;font-style:normal;color:#2a5caa;transform:scaleX(0.8867);-webkit-text-stroke:0.3px #2a5caa;">Report Ready</div>
<div class="t" style="left:960.70px;top:413.54px;font-size:14.3px;font-weight:normal;font-style:normal;color:#111111;transform:scaleX(0.9317);-webkit-text-stroke:0.3px #111111;">**Key insights from the AI-generated</div>
<div class="t" style="left:960.70px;top:431.04px;font-size:14.3px;font-weight:normal;font-style:normal;color:#111111;transform:scaleX(0.9418);-webkit-text-stroke:0.3px #111111;">Commentary.**</div>
<div class="t" style="left:977.77px;top:457.64px;font-size:14.3px;font-weight:normal;font-style:normal;color:#111111;transform:scaleX(0.9276);-webkit-text-stroke:0.3px #111111;">Higher PPE investments due to</div>
<div class="t" style="left:978.70px;top:474.64px;font-size:14.3px;font-weight:normal;font-style:normal;color:#111111;transform:scaleX(0.9231);-webkit-text-stroke:0.3px #111111;">accelerated capital projects.</div>
<div class="t" style="left:978.70px;top:495.75px;font-size:14.3px;font-weight:normal;font-style:normal;color:#111111;transform:scaleX(0.9370);-webkit-text-stroke:0.3px #111111;">Strong liquidity position from higher cash</div>
<div class="t" style="left:978.70px;top:512.64px;font-size:14.3px;font-weight:normal;font-style:normal;color:#111111;transform:scaleX(0.9350);-webkit-text-stroke:0.3px #111111;">holdings.</div>
<div class="t" style="left:978.70px;top:533.45px;font-size:14.3px;font-weight:normal;font-style:normal;color:#111111;transform:scaleX(0.9566);-webkit-text-stroke:0.3px #111111;">Strategic reprioritization from long -term</div>
<div class="t" style="left:978.70px;top:550.45px;font-size:14.3px;font-weight:normal;font-style:normal;color:#111111;transform:scaleX(0.9477);-webkit-text-stroke:0.3px #111111;">investments toward internal operations.</div>
<div class="t" style="left:929.80px;top:577.75px;font-size:14.3px;font-weight:normal;font-style:normal;color:#111111;transform:scaleX(0.9295);-webkit-text-stroke:0.3px #111111;">Your structured Balance Sheet report is now complete</div>
<div class="t" style="left:930.73px;top:595.14px;font-size:14.3px;font-weight:normal;font-style:normal;color:#111111;transform:scaleX(0.9347);-webkit-text-stroke:0.3px #111111;">with professional formatting and detailed variance</div>
<div class="t" style="left:929.80px;top:612.14px;font-size:14.3px;font-weight:normal;font-style:normal;color:#111111;transform:scaleX(0.8948);-webkit-text-stroke:0.3px #111111;">analysis.</div>
<div class="t" style="left:957.47px;top:674.17px;font-size:11.8px;font-weight:bold;font-style:italic;color:#8a8d92;transform:scaleX(0.7717);">Ask a question or make a request.</div>
<div class="t" style="left:1014.70px;top:706.74px;font-size:11.6px;font-weight:bold;font-style:italic;color:#8a8d92;transform:scaleX(0.7976);">AI-generated. Check your results.</div>

</body></html>
